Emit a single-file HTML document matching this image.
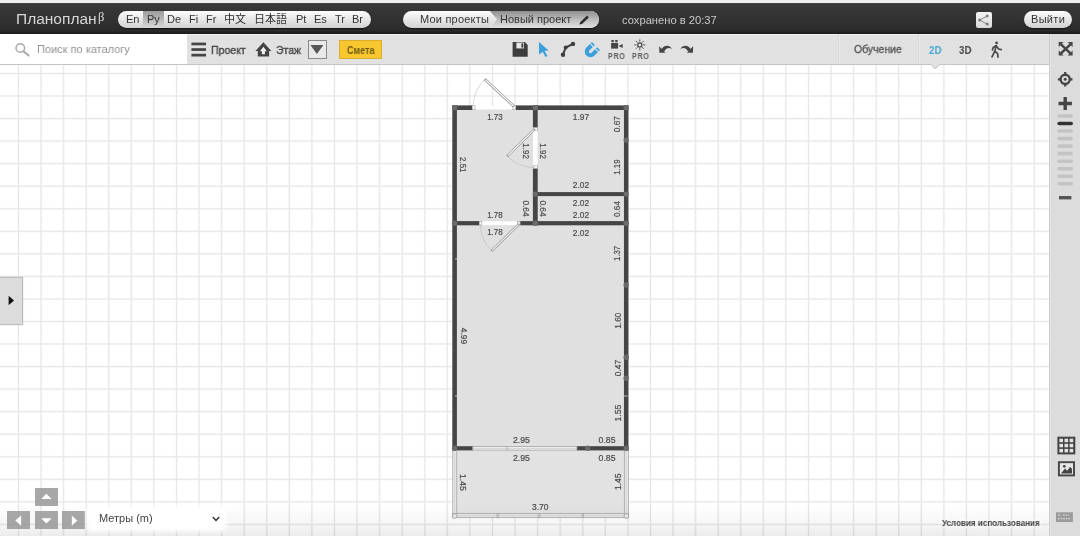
<!DOCTYPE html>
<html lang="ru">
<head>
<meta charset="utf-8">
<title>Планоплан</title>
<style>
html,body{margin:0;padding:0;}
body{width:1080px;height:536px;overflow:hidden;position:relative;background:#fff;font-family:"Liberation Sans","Noto Sans CJK JP",sans-serif;color:#333;}
.abs{position:absolute;}
.t{position:absolute;white-space:nowrap;line-height:1;transform-origin:0 0;will-change:transform;}
#chrome{left:0;top:0;width:1080px;height:4px;background:#efefef;}
#header{left:0;top:3.3px;width:1080px;height:31px;background:linear-gradient(#484848,#383838 5%,#323232 50%,#2b2b2b 88%,#1a1a1a);}
#toolbar{left:0;top:34px;width:1080px;height:30px;background:#e1e1e1;border-bottom:1px solid #c4c4c4;box-shadow:inset 0 1px 0 rgba(255,255,255,.5);}
#search{left:0;top:0;width:187px;height:30px;background:#fff;}
#sidebar{left:1049px;top:34px;width:31px;height:502px;background:#dcdcdc;border-left:1px solid #cdcdcd;box-shadow:inset 1px 0 0 #e4e4e4;box-sizing:border-box;}
#canvas{left:0;top:65px;width:1049px;height:471px;overflow:hidden;}
.pill{position:absolute;height:16.5px;border-radius:9px;background:linear-gradient(#fdfdfd,#e9e9e9 45%,#d2d2d2);box-shadow:0 1px 1px rgba(0,0,0,.6);}
.lg{top:2.5px;font-size:11px;color:#333;}
.lgsel{top:0;height:100%;background:linear-gradient(#9c9c9c,#b9b9b9 50%,#d9d9d9);}
.tb{font-size:11.5px;font-weight:400;color:#444;-webkit-text-stroke:.35px currentColor;}
.pro{font-size:8.6px;font-weight:700;color:#5c5c5c;letter-spacing:.9px;transform:scaleX(.82);}
.sep{top:0;width:1px;height:30px;background:#d8d8d8;box-shadow:1px 0 0 #e9e9e9;}
.nb{width:23.1px;height:17.7px;background:rgba(152,152,152,.85);overflow:hidden;}
.nb svg{position:absolute;left:0;top:0;}
</style>
</head>
<body>
<div id="canvas" class="abs"></div>
<svg id="plan" class="abs" style="left:0;top:0;will-change:transform" width="1080" height="536" viewBox="0 0 1080 536">
<defs><path id="gridpath" d="M18.5 64V536M41.1 64V536M63.6 64V536M86.2 64V536M108.8 64V536M131.3 64V536M153.9 64V536M176.5 64V536M199.1 64V536M221.6 64V536M244.2 64V536M266.8 64V536M289.3 64V536M311.9 64V536M334.5 64V536M357.0 64V536M379.6 64V536M402.2 64V536M424.8 64V536M447.3 64V536M469.9 64V536M492.5 64V536M515.0 64V536M537.6 64V536M560.2 64V536M582.8 64V536M605.3 64V536M627.9 64V536M650.5 64V536M673.0 64V536M695.6 64V536M718.2 64V536M740.7 64V536M763.3 64V536M785.9 64V536M808.5 64V536M831.0 64V536M853.6 64V536M876.2 64V536M898.7 64V536M921.3 64V536M943.9 64V536M966.4 64V536M989.0 64V536M1011.6 64V536M1034.2 64V536M0 73.5H1050M0 96.0H1050M0 118.6H1050M0 141.1H1050M0 163.7H1050M0 186.2H1050M0 208.8H1050M0 231.3H1050M0 253.9H1050M0 276.4H1050M0 299.0H1050M0 321.5H1050M0 344.0H1050M0 366.6H1050M0 389.1H1050M0 411.7H1050M0 434.2H1050M0 456.8H1050M0 479.3H1050M0 501.9H1050M0 524.4H1050" fill="none"/></defs>
<use href="#gridpath" stroke="#f8f8f8" stroke-width="2.2"/>
<use href="#gridpath" stroke="#e7e7e7" stroke-width="1"/>
<g id="floorplan">
<rect x="454" y="107" width="172" height="341" fill="#e0e0e0"/>
<rect x="454.5" y="448" width="172" height="67.5" fill="#e2e2e2"/>
<rect x="452.3" y="105.40" width="20.00" height="4.6" fill="#454545"/>
<rect x="515.6" y="105.40" width="112.80" height="4.6" fill="#454545"/>
<rect x="452.30" y="105.4" width="4.6" height="345.00" fill="#454545"/>
<rect x="623.95" y="105.4" width="4.5" height="345.00" fill="#454545"/>
<rect x="532.90" y="105.4" width="4.8" height="22.30" fill="#454545"/>
<rect x="532.90" y="168.3" width="4.8" height="57.00" fill="#454545"/>
<rect x="535" y="192.10" width="93.00" height="4.0" fill="#454545"/>
<rect x="452.3" y="221.10" width="27.00" height="4.2" fill="#454545"/>
<rect x="520.1" y="221.10" width="108.30" height="4.2" fill="#454545"/>
<rect x="452.3" y="446.20" width="20.50" height="4.2" fill="#454545"/>
<rect x="576.9" y="446.20" width="51.60" height="4.2" fill="#454545"/>
<rect x="472.3" y="105.9" width="43.3" height="3.6" fill="#fff"/>
<rect x="472.4" y="105.7" width="2.6" height="4" fill="#fff" stroke="#999" stroke-width=".6"/>
<rect x="512.9" y="105.7" width="2.6" height="4" fill="#fff" stroke="#999" stroke-width=".6"/>
<path d="M473 106.5A41.2 41.2 0 0 1 484.8 79.2" fill="none" stroke="#cfcfcf" stroke-width=".8"/>
<path d="M514.2 106.6L484.8 79.25" stroke="#8a8a8a" stroke-width="2.6" stroke-linecap="butt"/><path d="M513.6 106L485.4 79.8" stroke="#fff" stroke-width="1.2"/>
<rect x="533" y="127.7" width="4.5" height="40.6" fill="#fff"/>
<rect x="533.2" y="127.8" width="4.1" height="2.4" fill="#fff" stroke="#999" stroke-width=".6"/>
<rect x="533.2" y="165.8" width="4.1" height="2.4" fill="#fff" stroke="#999" stroke-width=".6"/>
<path d="M507.2 156.1A38.7 38.7 0 0 0 534.8 167.7" fill="none" stroke="#c4c4c4" stroke-width=".8"/>
<path d="M534.8 129L507.2 156.1" stroke="#8a8a8a" stroke-width="2.4"/><path d="M534.2 129.6L507.8 155.5" stroke="#fff" stroke-width="1.1"/>
<rect x="479.3" y="221.3" width="40.8" height="3.8" fill="#fff"/>
<rect x="479.4" y="221.3" width="2.4" height="3.8" fill="#fff" stroke="#999" stroke-width=".6"/>
<rect x="517.6" y="221.3" width="2.4" height="3.8" fill="#fff" stroke="#999" stroke-width=".6"/>
<path d="M480.3 224.5A38.8 38.8 0 0 0 491.5 251" fill="none" stroke="#c4c4c4" stroke-width=".8"/>
<path d="M519.1 224.1L491.5 251" stroke="#8a8a8a" stroke-width="2.4"/><path d="M518.5 224.7L492.1 250.4" stroke="#fff" stroke-width="1.1"/>
<rect x="472.8" y="446.5" width="104.1" height="3.6" fill="#f4f4f4" stroke="#999" stroke-width=".7"/>
<path d="M472.8 448.3H576.9M506.5 446.5v3.6M507.8 446.5v3.6" stroke="#aaa" stroke-width=".5"/>
<rect x="452.8" y="450.4" width="4" height="67.2" fill="#ececec" stroke="#9a9a9a" stroke-width=".7"/>
<rect x="624.3" y="450.4" width="4" height="67.2" fill="#ececec" stroke="#9a9a9a" stroke-width=".7"/>
<rect x="452.8" y="513.5" width="175.5" height="4.2" fill="#ececec" stroke="#9a9a9a" stroke-width=".7"/>
<path d="M452.8 515.6H628.3M454.8 450.4V517M626.3 450.4V517" stroke="#bbb" stroke-width=".5"/>
<path d="M497.0 513.5v4.2M498.6 513.5v4.2" stroke="#999" stroke-width=".6"/>
<path d="M538.3000000000001 513.5v4.2M539.9 513.5v4.2" stroke="#999" stroke-width=".6"/>
<path d="M581.9000000000001 513.5v4.2M583.5 513.5v4.2" stroke="#999" stroke-width=".6"/>
<circle cx="454.6" cy="516" r="2.4" fill="#e8e8e8" stroke="#999" stroke-width=".7"/><circle cx="626.4" cy="516" r="2.4" fill="#e8e8e8" stroke="#999" stroke-width=".7"/>
<circle cx="454.6" cy="107.7" r="2.7" fill="#6b6b6b"/>
<circle cx="535.3" cy="107.7" r="2.7" fill="#6b6b6b"/>
<circle cx="626.2" cy="107.7" r="2.7" fill="#6b6b6b"/>
<circle cx="626.2" cy="140.1" r="2.7" fill="#6b6b6b"/>
<circle cx="535.3" cy="194.1" r="2.7" fill="#6b6b6b"/>
<circle cx="626.2" cy="194.1" r="2.7" fill="#6b6b6b"/>
<circle cx="454.6" cy="223.2" r="2.7" fill="#6b6b6b"/>
<circle cx="535.3" cy="223.2" r="2.7" fill="#6b6b6b"/>
<circle cx="626.2" cy="223.2" r="2.7" fill="#6b6b6b"/>
<circle cx="626.2" cy="285" r="2.7" fill="#6b6b6b"/>
<circle cx="626.2" cy="357.2" r="2.7" fill="#6b6b6b"/>
<circle cx="626.2" cy="378.2" r="2.7" fill="#6b6b6b"/>
<circle cx="587.6" cy="448.3" r="2.7" fill="#6b6b6b"/>
<circle cx="626.2" cy="448.3" r="2.7" fill="#6b6b6b"/>
<circle cx="454.6" cy="448.3" r="2.7" fill="#6b6b6b"/>
<path d="M455 258.9h3.5M455 396h3.5M624 396h3.5" stroke="#ddd" stroke-width=".8"/>
<g id="dims" font-family="Liberation Sans, sans-serif" font-size="9.6" fill="#4a4a4a" stroke="#4a4a4a" stroke-width=".2" text-anchor="middle"><text x="494.9" y="120" textLength="15.5" lengthAdjust="spacingAndGlyphs">1.73</text>
<text x="580.9" y="120" textLength="16.3" lengthAdjust="spacingAndGlyphs">1.97</text>
<text x="580.9" y="188.4" textLength="16.3" lengthAdjust="spacingAndGlyphs">2.02</text>
<text x="580.9" y="206.3" textLength="16.3" lengthAdjust="spacingAndGlyphs">2.02</text>
<text x="580.9" y="217.8" textLength="16.3" lengthAdjust="spacingAndGlyphs">2.02</text>
<text x="580.9" y="235.7" textLength="16.3" lengthAdjust="spacingAndGlyphs">2.02</text>
<text x="494.9" y="217.5" textLength="15.5" lengthAdjust="spacingAndGlyphs">1.78</text>
<text x="494.9" y="235.1" textLength="15.5" lengthAdjust="spacingAndGlyphs">1.78</text>
<text x="521.4" y="442.6" textLength="17.0" lengthAdjust="spacingAndGlyphs">2.95</text>
<text x="521.4" y="460.6" textLength="17.0" lengthAdjust="spacingAndGlyphs">2.95</text>
<text x="607.1" y="442.6" textLength="17.0" lengthAdjust="spacingAndGlyphs">0.85</text>
<text x="607.1" y="460.6" textLength="17.0" lengthAdjust="spacingAndGlyphs">0.85</text>
<text x="540.3" y="510.1" textLength="16.6" lengthAdjust="spacingAndGlyphs">3.70</text>
<text transform="translate(460.2 164.8) rotate(90)" textLength="15.5" lengthAdjust="spacingAndGlyphs">2.51</text>
<text transform="translate(522.5 151.1) rotate(90)" textLength="15.5" lengthAdjust="spacingAndGlyphs">1.92</text>
<text transform="translate(540.4 151.1) rotate(90)" textLength="15.5" lengthAdjust="spacingAndGlyphs">1.92</text>
<text transform="translate(522.5 208.5) rotate(90)" textLength="16.2" lengthAdjust="spacingAndGlyphs">0.64</text>
<text transform="translate(540.4 208.5) rotate(90)" textLength="16.2" lengthAdjust="spacingAndGlyphs">0.64</text>
<text transform="translate(460.5 335.9) rotate(90)" textLength="16.4" lengthAdjust="spacingAndGlyphs">4.99</text>
<text transform="translate(460.2 482.4) rotate(90)" textLength="16.6" lengthAdjust="spacingAndGlyphs">1.45</text>
<text transform="translate(620.2 124.2) rotate(-90)" textLength="16.3" lengthAdjust="spacingAndGlyphs">0.67</text>
<text transform="translate(620.2 167.1) rotate(-90)" textLength="15.5" lengthAdjust="spacingAndGlyphs">1.19</text>
<text transform="translate(620.2 209.0) rotate(-90)" textLength="15.8" lengthAdjust="spacingAndGlyphs">0.64</text>
<text transform="translate(620.2 253.5) rotate(-90)" textLength="15.2" lengthAdjust="spacingAndGlyphs">1.37</text>
<text transform="translate(620.5 320.7) rotate(-90)" textLength="16.0" lengthAdjust="spacingAndGlyphs">1.60</text>
<text transform="translate(620.5 368.0) rotate(-90)" textLength="16.3" lengthAdjust="spacingAndGlyphs">0.47</text>
<text transform="translate(620.5 413.1) rotate(-90)" textLength="16.8" lengthAdjust="spacingAndGlyphs">1.55</text>
<text transform="translate(620.5 481.7) rotate(-90)" textLength="16.6" lengthAdjust="spacingAndGlyphs">1.45</text></g>
</g>
</svg>
<div id="chrome" class="abs"></div>
<div id="header" class="abs">
<div class="t" id="logo" style="left:15.6px;top:8.1px;font-size:15.5px;color:#d6d6d6;">Планоплан<span id="beta" style="font-family:'Liberation Serif',serif;font-size:12.5px;position:relative;top:-3.2px;left:1.5px;color:#ddd;">β</span></div>
<div class="pill" id="langs" style="left:117.5px;top:8px;width:253px;">
<span class="t lg" style="left:8px">En</span><span class="lgsel abs" style="left:25.5px;width:21px;"></span><span class="t lg" style="left:29px">Ру</span><span class="t lg" style="left:49px">De</span><span class="t lg" style="left:71px">Fi</span><span class="t lg" style="left:88px">Fr</span><span class="t lg" style="left:106px">中文</span><span class="t lg" style="left:136.5px">日本語</span><span class="t lg" style="left:178px">Pt</span><span class="t lg" style="left:196px">Es</span><span class="t lg" style="left:217px">Tr</span><span class="t lg" style="left:234.5px">Br</span>
</div>
<div class="pill" id="crumbs" style="left:403px;top:8px;width:196px;overflow:hidden;">
<span class="abs" id="crumb2bg" style="left:84px;top:0;width:112px;height:100%;background:linear-gradient(#8f8f8f,#bdbdbd 50%,#e2e2e2);"></span>
<svg class="abs" style="left:80px;top:0" width="16" height="17" viewBox="0 0 16 17"><path d="M0 0H6.5L13.5 8.25L6.5 16.5H0Z" fill="url(#gpill)"/><path d="M6.5 0L13.5 8.25L6.5 16.5" fill="none" stroke="#fff" stroke-opacity=".7" stroke-width=".8"/><defs><linearGradient id="gpill" x1="0" y1="0" x2="0" y2="1"><stop offset="0" stop-color="#fdfdfd"/><stop offset=".45" stop-color="#e9e9e9"/><stop offset="1" stop-color="#d2d2d2"/></linearGradient></defs></svg>
<span class="t lg" id="cr1" style="left:16.8px;letter-spacing:.2px">Мои проекты</span><span class="t lg" id="cr2" style="left:97px">Новый проект</span>
<svg class="abs" id="pencil" style="left:176px;top:3.5px" width="11" height="10" viewBox="0 0 11 10"><path d="M0.5 9.6L1.2 7.2L8 0.6L9.9 2.4L3 9Z" fill="#2e2e2e"/></svg>
</div>
<div class="t" id="saved" style="left:622px;top:12px;font-size:11.2px;color:#c9c9c9;">сохранено в 20:37</div>
<div class="abs" id="share" style="left:975.6px;top:8.7px;width:16.2px;height:16.4px;border-radius:2px;background:linear-gradient(#f4f4f4,#dadada);">
<svg class="abs" style="left:0;top:0" width="16.2" height="16.4" viewBox="975.6 12 16.2 16.4"><path d="M986.7 16.1L979.3 20.1L986.7 24.1" fill="none" stroke="#7c7c7c" stroke-width=".9"/><circle cx="986.8" cy="16.1" r="1.5" fill="#7c7c7c"/><circle cx="979.2" cy="20.1" r="1.5" fill="#7c7c7c"/><circle cx="986.8" cy="24.1" r="1.5" fill="#7c7c7c"/></svg>
</div>
<div class="pill" id="logout" style="left:1023.5px;top:8px;width:48.5px;"><span class="t lg" style="left:7.2px;letter-spacing:.3px">Выйти</span></div>
</div>
<div id="toolbar" class="abs"><div id="search" class="abs">
<svg class="abs" style="left:14px;top:7px" width="18" height="17" viewBox="14 41 18 17"><circle cx="20.3" cy="48" r="4.3" fill="none" stroke="#a9a9a9" stroke-width="1.5"/><path d="M23.4 51.2L28.6 55.6" stroke="#a9a9a9" stroke-width="2" stroke-linecap="round"/></svg>
<span class="t" id="stext" style="left:36.8px;top:9.9px;font-size:11.5px;color:#929292;transform:scaleX(.957);">Поиск по каталогу</span></div>
<div class="abs sep" style="left:838px"></div><div class="abs sep" style="left:918px"></div>
<span class="t tb" id="tproj" style="left:211px;top:10.9px;transform:scaleX(.916)">Проект</span>
<span class="t tb" id="tfloor" style="left:275.8px;top:10.9px;transform:scaleX(.91)">Этаж</span>
<div class="abs" id="ddl" style="left:307.8px;top:5.8px;width:19px;height:18.9px;box-sizing:border-box;border:1.3px solid #8a8a8a;background:#e9e9e9;"></div>
<div class="abs" id="smeta" style="left:339px;top:6.2px;width:43px;height:18.8px;box-sizing:border-box;border:1px solid #dcae2c;background:#f8c730;"><span class="t" style="left:6.8px;top:3.6px;font-size:10.5px;font-weight:700;color:#6e5a14;transform:scaleX(.858)">Смета</span></div>
<span class="t pro" style="left:607.6px;top:18.4px;">PRO</span><span class="t pro" style="left:631.8px;top:18.4px;">PRO</span>
<span class="t tb" id="tlearn" style="left:853.6px;top:9.9px;color:#555;transform:scaleX(.908)">Обучение</span>
<span class="t tb" id="t2d" style="left:929.2px;top:10.8px;color:#47a6d6;font-weight:700;-webkit-text-stroke:0;transform:scaleX(.84)">2D</span>
<span class="t tb" id="t3d" style="left:959.3px;top:10.8px;font-weight:700;-webkit-text-stroke:0;transform:scaleX(.84)">3D</span>
<svg id="tbicons" class="abs" style="left:0;top:0;overflow:visible" width="1080" height="31" viewBox="0 34 1080 31">
<g fill="#444">
<rect x="191.4" y="42.6" width="14.6" height="2.7"/><rect x="191.4" y="48.2" width="14.6" height="2.7"/><rect x="191.4" y="53.8" width="14.6" height="2.7"/>
<path d="M263.4 42.2L271.4 50.9H269.1V56.6H257.8V50.9H255.4Z"/>
<path d="M263.4 46.8L266.8 51.3H264.9V54.2H261.9V51.3H260Z" fill="#f2f2f2"/>
<path d="M310.4 45H323.4L316.9 53.9Z" fill="#555"/>
</g>
<g id="isave"><path d="M512.6 42.1H524.9L527.7 44.9V56.7H512.6Z" fill="#3e3e3e"/><rect x="516.4" y="42.6" width="7.6" height="5.8" fill="#e8e8e8"/><rect x="521.4" y="43.4" width="1.9" height="4.2" fill="#3e3e3e"/></g>
<path id="icursor" d="M539 41.9L548.6 50.4L544.6 50.7L547.4 56.1L545.5 57.1L542.7 51.7L539 54.4Z" fill="#3a9fda"/>
<g id="ipoly" fill="#3e3e3e" stroke="#3e3e3e"><path d="M573 43.9L565.7 47.5L563 54.7" fill="none" stroke-width="2"/><circle cx="573" cy="43.9" r="2.2" stroke="none"/><circle cx="565.7" cy="47.5" r="2" stroke="none"/><circle cx="563" cy="54.7" r="2.2" stroke="none"/></g>
<g id="imagnet" transform="translate(591.3 50.7) rotate(45)"><path d="M-5.7 -6.6V1.2A5.7 5.7 0 0 0 5.7 1.2V-6.6H1.6V1.2A1.6 1.6 0 0 1 -1.6 1.2V-6.6Z" fill="#3a9fda"/><path d="M-5.7 -4.3H-1.6M1.6 -4.3H5.7" stroke="#dff0fa" stroke-width="1.1"/></g>
<g id="icam" fill="#444"><rect x="611.1" y="43" width="7" height="5.6"/><rect x="611.4" y="40" width="2.4" height="2.2"/><rect x="615.2" y="40" width="2.4" height="2.2"/><path d="M622.7 43.9V47.9L618.6 45.9Z"/></g>
<g id="isun" stroke="#555" stroke-width="1" fill="none"><circle cx="639.8" cy="44.9" r="2" stroke-width="1.5" fill="#f4f4f4"/><path d="M639.8 39.4v2.2M639.8 48.2v2.2M634.3 44.9h2.2M643.1 44.9h2.2M635.9 41l1.6 1.6M642.1 47.2l1.6 1.6M643.7 41l-1.6 1.6M637.5 47.2l-1.6 1.6"/></g>
<g id="iundo" fill="#444"><path d="M659.2 46.2L665.4 52.7L659.4 52.7Z"/><path d="M661.4 49.2C664.3 44.9 669.4 44.7 672 48.9C669 47.3 666 48 664.2 51.6Z"/></g>
<g id="iredo" fill="#444" transform="translate(1352.3 0) scale(-1 1)"><path d="M659.2 46.2L665.4 52.7L659.4 52.7Z"/><path d="M661.4 49.2C664.3 44.9 669.4 44.7 672 48.9C669 47.3 666 48 664.2 51.6Z"/></g>
<path id="tabptr" d="M930.6 64.3L935.3 69L940 64.3" fill="#e1e1e1" stroke="#bcbcbc" stroke-width="1"/><path d="M931.4 64.4H939.2" stroke="#e1e1e1" stroke-width="1.4"/>
<g id="iwalk" fill="none" stroke="#4a4a4a" stroke-width="1.7" stroke-linecap="round" stroke-linejoin="round"><circle cx="996.6" cy="42.9" r="1.4" fill="#4a4a4a" stroke="none"/><path d="M996.2 45.6L994.9 51L992 56.8M994.9 51L997.6 53.6L998 57.2M996.2 45.6L993.2 47.4L992.4 50M996.4 46L998.6 49L1001.2 49.6"/></g>
</svg>
</div>
<div id="sidebar" class="abs">
<svg class="abs" style="left:-1px;top:0" width="31" height="502" viewBox="1049 34 31 502">
<g id="iexpand" stroke="#444" stroke-width="2.4" fill="#444"><path d="M1061 44.3L1070.4 53.3M1070.4 44.3L1061 53.3"/><path stroke="none" d="M1058.7 42H1063.6L1058.7 46.9ZM1072.6 42V46.9L1067.7 42ZM1058.7 55.5V50.6L1063.6 55.5ZM1072.6 55.5H1067.7L1072.6 50.6Z"/></g>
<g id="ilocate"><circle cx="1065.2" cy="79.3" r="4.6" fill="none" stroke="#444" stroke-width="2.4"/><circle cx="1065.2" cy="79.3" r="1.5" fill="#444"/><path d="M1065.2 72v2.6M1065.2 84v2.6M1057.9 79.3h2.6M1069.9 79.3h2.6" stroke="#444" stroke-width="2.2"/></g>
<path id="iplus" d="M1058.5 103.5H1071.9M1065.2 96.9V110.1" stroke="#444" stroke-width="3.4"/>
<rect x="1057.3" y="114.20" width="15.7" height="3.6" rx="1.8" fill="#c3c3c3"/><rect x="1057.3" y="121.73" width="15.7" height="3.6" rx="1.8" fill="#333"/><rect x="1057.3" y="129.26" width="15.7" height="3.6" rx="1.8" fill="#c3c3c3"/><rect x="1057.3" y="136.79" width="15.7" height="3.6" rx="1.8" fill="#c3c3c3"/><rect x="1057.3" y="144.32" width="15.7" height="3.6" rx="1.8" fill="#c3c3c3"/><rect x="1057.3" y="151.85" width="15.7" height="3.6" rx="1.8" fill="#c3c3c3"/><rect x="1057.3" y="159.38" width="15.7" height="3.6" rx="1.8" fill="#c3c3c3"/><rect x="1057.3" y="166.91" width="15.7" height="3.6" rx="1.8" fill="#c3c3c3"/><rect x="1057.3" y="174.44" width="15.7" height="3.6" rx="1.8" fill="#c3c3c3"/><rect x="1057.3" y="181.97" width="15.7" height="3.6" rx="1.8" fill="#c3c3c3"/>
<rect x="1059" y="196" width="12.4" height="3.4" fill="#555"/>
<g id="igrid"><rect x="1057.4" y="436.7" width="17.9" height="17.7" fill="#444"/><g fill="#e4e4e4"><rect x="1059.4" y="438.7" width="3.6" height="3.5"/><rect x="1064.5" y="438.7" width="3.6" height="3.5"/><rect x="1069.6" y="438.7" width="3.6" height="3.5"/><rect x="1059.4" y="443.8" width="3.6" height="3.5"/><rect x="1064.5" y="443.8" width="3.6" height="3.5"/><rect x="1069.6" y="443.8" width="3.6" height="3.5"/><rect x="1059.4" y="448.9" width="3.6" height="3.5"/><rect x="1064.5" y="448.9" width="3.6" height="3.5"/><rect x="1069.6" y="448.9" width="3.6" height="3.5"/></g></g>
<g id="iimage"><rect x="1058.9" y="462.2" width="15.1" height="13.2" fill="#e6e6e6" stroke="#444" stroke-width="1.9"/><path d="M1061 473.4L1065 468.6L1067.3 470.8L1070 466.8L1072 469V473.4Z" fill="#444"/><circle cx="1064.3" cy="466.3" r="1.4" fill="#444"/></g>
<g id="iruler"><rect x="1056" y="512.3" width="16.9" height="9.7" fill="#9b9b9b"/><path d="M1058 515.2h3M1063 515.2h6M1058 518.6h12" stroke="#d8d8d8" stroke-width="1.2" stroke-dasharray="1.6 1"/></g>
</svg>
</div>
<div id="lefttoggle" class="abs" style="left:0;top:277px;width:23px;height:47.5px;background:#dcdcdc;border:1px solid #bdbdbd;border-left:0;box-sizing:border-box;box-shadow:0 0 2px rgba(0,0,0,.15);"><svg class="abs" style="left:8px;top:17px" width="7" height="11" viewBox="0 0 7 11"><path d="M0.6 0.8L6 5.5L0.6 10.2Z" fill="#111"/></svg></div>
<div id="bottomfade" class="abs" style="left:0;top:505px;width:1049px;height:31px;background:linear-gradient(rgba(0,0,0,0),rgba(0,0,0,.035) 60%,rgba(0,0,0,.075));"></div>
<div id="nav" class="abs" style="left:0;top:0;">
<div class="nb abs" style="left:34.5px;top:488px;"><svg width="24" height="18" viewBox="0 0 24 18"><path d="M11.4 5.8L16.6 11.1H6.2Z" fill="#fff"/></svg></div>
<div class="nb abs" style="left:7.4px;top:511.4px;"><svg width="24" height="18" viewBox="0 0 24 18"><path d="M8.3 9.6L14.1 4.5V14.7Z" fill="#fff"/></svg></div>
<div class="nb abs" style="left:34.5px;top:511.4px;"><svg width="24" height="18" viewBox="0 0 24 18"><path d="M11.4 12.6L16.6 7.3H6.2Z" fill="#fff"/></svg></div>
<div class="nb abs" style="left:61.7px;top:511.4px;"><svg width="24" height="18" viewBox="0 0 24 18"><path d="M15.3 9.6L9.8 4.5V14.7Z" fill="#fff"/></svg></div>
</div>
<div id="units" class="abs" style="left:89px;top:508px;width:135px;height:21px;background:#fff;box-shadow:0 0 4px 2px #fff;border-radius:2px;"><span class="t" style="left:10.3px;top:5.2px;font-size:11px;color:#444;transform:scaleX(1)">Метры (m)</span><svg class="abs" style="left:122.5px;top:7.5px" width="8" height="6" viewBox="0 0 8 6"><path d="M0.8 0.9L4 4.4L7.2 0.9" fill="none" stroke="#333" stroke-width="1.5"/></svg></div>
<div id="terms" class="t" style="left:941.6px;top:519px;font-size:9.3px;font-weight:700;color:#444;transform:scaleX(.869);text-shadow:0 0 4px #fff,0 0 6px #fff;">Условия использования</div>
</body>
</html>
